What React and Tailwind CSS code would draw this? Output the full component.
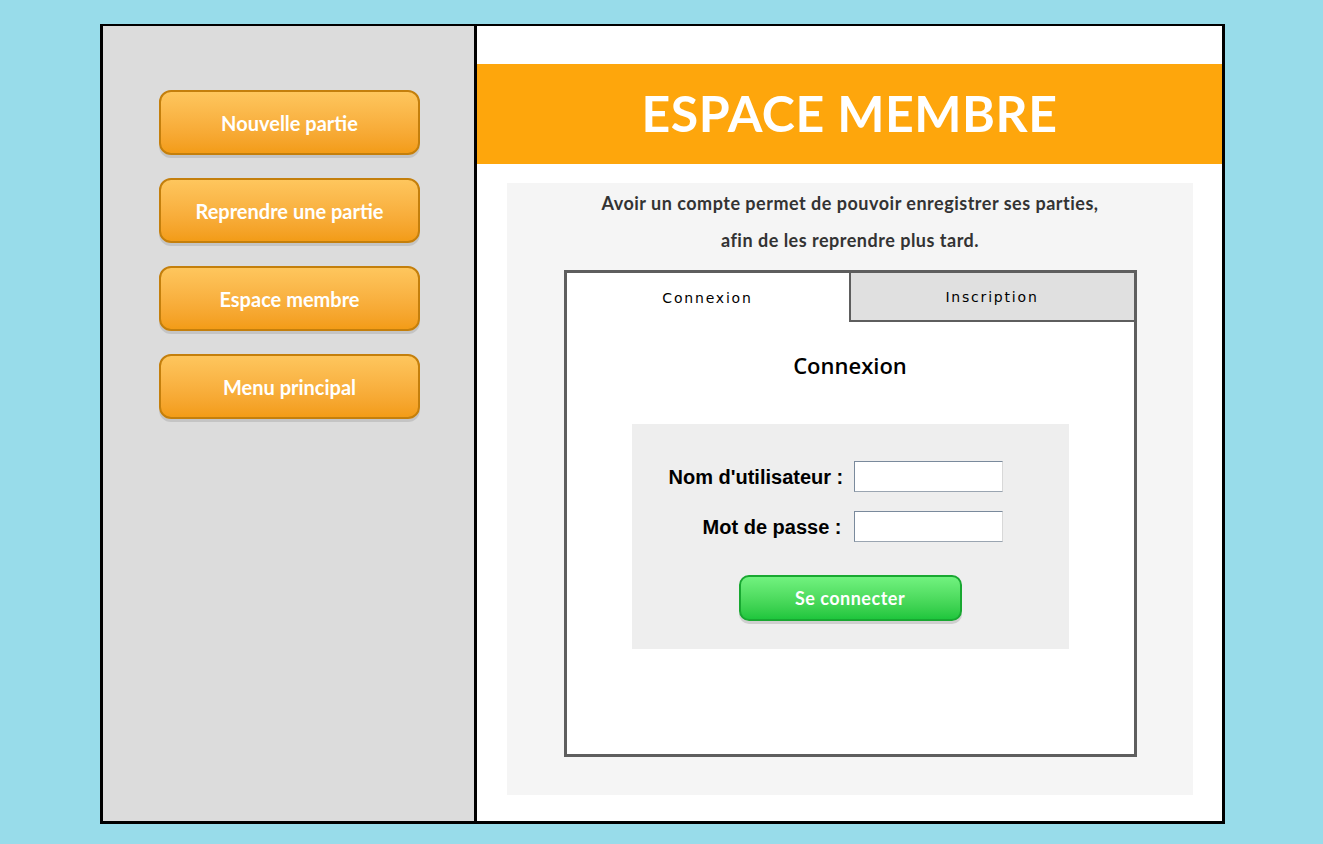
import { useState } from "react";

const MENU = ["Nouvelle partie", "Reprendre une partie", "Espace membre", "Menu principal"];

const App = () => {
    const [tab, setTab] = useState("connexion");
    const [user, setUser] = useState("");
    const [pass, setPass] = useState("");

    const calibri = { fontFamily: "Lato, 'Open Sans', sans-serif" };

    return (
        <div className="w-[1323px] h-[844px] bg-[#98dcea] pt-[24px] pl-[100px]">
            <div className="w-[1125px] h-[800px] flex border-t-2 border-l-[3px] border-r-[3px] border-b-[3px] border-black">

                {/* menu */}
                <div className="w-[371px] bg-[#dcdcdc] flex flex-col pt-[64px] pl-[56px] gap-[23px]" style={calibri}>
                    {MENU.map((label) => (
                        <button key={label} className="w-[261px] h-[65px] rounded-[12px] border-2 border-[#c47f0c] bg-gradient-to-b from-[#fec65d] to-[#f39c16] text-white font-bold text-[20px] shadow-[0_3px_0_#c4c4c4] cursor-pointer">
                            {label}
                        </button>
                    ))}
                </div>

                <div className="w-[3px] bg-black" />

                {/* contenu */}
                <div className="flex-1 bg-white pt-[38px] flex flex-col">
                    <div className="h-[100px] bg-[#fea60c] flex items-center justify-center text-white font-bold text-[50px] tracking-[0.5px] pb-[2px]" style={calibri}>
                        ESPACE MEMBRE
                    </div>

                    <div className="mt-[19px] mx-[30px] mr-[29px] h-[612px] bg-[#f5f5f5] pt-[2px] flex flex-col items-center">
                        <p className="text-[18px] leading-[37px] font-bold text-[#333] text-center tracking-[0.5px]" style={calibri}>
                            Avoir un compte permet de pouvoir enregistrer ses parties,<br />
                            afin de les reprendre plus tard.
                        </p>

                        <div className="mt-[11px] w-[573px] h-[487px] border-[3px] border-[#5e5e5e] bg-white flex flex-col">
                            <div className="flex h-[49px] text-[14px] tracking-[1.8px] text-black" style={{ fontFamily: "'DejaVu Sans', Verdana, sans-serif" }}>
                                <button onClick={() => setTab("connexion")} className={"w-[282px] flex items-center justify-center pt-[2px] " + (tab === "connexion" ? "bg-white" : "bg-[#e0e0e0] border-b-2 border-r-2 border-[#5e5e5e]")}>
                                    Connexion
                                </button>
                                <button onClick={() => setTab("inscription")} className={"flex-1 flex items-center justify-center pt-[2px] " + (tab === "inscription" ? "bg-white" : "bg-[#e0e0e0] border-b-2 border-l-2 border-[#5e5e5e]")}>
                                    Inscription
                                </button>
                            </div>

                            <h2 className="mt-[27px] text-center text-[22px] font-semibold text-black" style={{ fontFamily: "'Open Sans', sans-serif" }}>
                                Connexion
                            </h2>

                            <div className="mt-[42px] mx-auto w-[437px] h-[225px] bg-[#eeeeee] pt-[37px] pl-[37px]">
                                <div className="grid grid-cols-[173px_149px] gap-x-[12px] gap-y-[19px] items-center text-[20px] font-bold text-black" style={{ fontFamily: "'Liberation Sans', Arial, sans-serif" }}>
                                    <label className="text-right whitespace-nowrap">Nom d'utilisateur :</label>
                                    <input value={user} onChange={e => setUser(e.target.value)} className="h-[31px] bg-white border border-[#7a8a9c] border-r-[#d8d8d8] border-b-[#9aa5b1] outline-none px-1 text-[14px] font-normal" />
                                    <label className="text-right whitespace-nowrap">Mot de passe :</label>
                                    <input type="password" value={pass} onChange={e => setPass(e.target.value)} className="h-[31px] bg-white border border-[#7a8a9c] border-r-[#d8d8d8] border-b-[#9aa5b1] outline-none px-1 text-[14px] font-normal" />
                                </div>
                                <button className="mt-[33px] ml-[70px] w-[223px] h-[46px] rounded-[10px] border-2 border-[#18a831] bg-gradient-to-b from-[#71f27f] to-[#1ec63d] text-white font-bold text-[18px] tracking-[0.5px] shadow-[0_3px_0_#cfcfcf] cursor-pointer" style={calibri}>
                                    Se connecter
                                </button>
                            </div>
                        </div>
                    </div>
                </div>
            </div>
        </div>
    )
}

export default App;
